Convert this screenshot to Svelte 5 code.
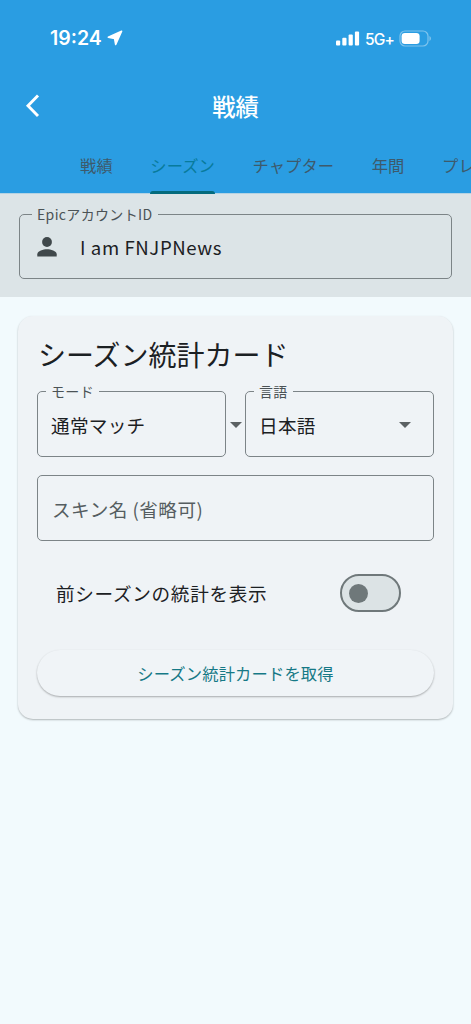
<script lang="ts">
  const tabs = ['戦績', 'シーズン', 'チャプター', '年間', 'プレイリスト'];
  let active = $state('シーズン');
  let previous = $state(false);
</script>

{#snippet arrow()}
  <svg class="arrow" width="12" height="6" viewBox="0 0 12 6"><path d="M0 0h12L6 6z" fill="#5b6163" /></svg>
{/snippet}

<div class="screen">
  <header>
    <div class="status">
      <span class="time">19:24</span>
      <svg class="location" width="16" height="16" viewBox="0 0 16 16">
        <path d="M14.600 1.200 1.300 7.200 7.600 8.500 8.700 14.500z" fill="#fff" stroke="#fff" stroke-width="1.600" stroke-linejoin="round" />
      </svg>
      <svg class="signal" width="24" height="15" viewBox="0 0 24 15" fill="#fff">
        <rect x="0" y="9.500" width="4.200" height="5" rx="1" />
        <rect x="6.300" y="6.700" width="4.200" height="7.800" rx="1" />
        <rect x="12.600" y="3.600" width="4.200" height="10.900" rx="1" />
        <rect x="18.900" y="0.500" width="4.200" height="14" rx="1" />
      </svg>
      <span class="network">5G+</span>
      <svg class="battery" width="33" height="17" viewBox="0 0 33 17">
        <rect x="1" y="1" width="28" height="15" rx="5" fill="none" stroke="#fff" stroke-opacity=".4" stroke-width="1.200" />
        <rect x="2.600" y="3" width="18" height="11" rx="3.300" fill="#fff" />
        <path d="M30.500 6v5c1.800-.7 1.800-4.300 0-5z" fill="#fff" fill-opacity=".45" />
      </svg>
    </div>

    <div class="bar">
      <svg width="16" height="24" viewBox="0 0 16 24"><path d="M13 1.500 3 11.700 13 22" fill="none" stroke="#fff" stroke-width="2.900" /></svg>
      <h1>戦績</h1>
    </div>

    <nav>
      {#each tabs as tab}
        <button class="tab" class:active={tab === active} onclick={() => (active = tab)}>{tab}</button>
      {/each}
    </nav>
  </header>

  <section class="account">
    <fieldset>
      <legend>EpicアカウントID</legend>
      <svg class="person" width="20" height="20" viewBox="0 0 20 20" fill="#40484b">
        <circle cx="10" cy="5" r="4.900" />
        <path d="M.3 19.500v-2.300c0-3.300 6.200-5 9.700-5s9.700 1.700 9.700 5v2.300z" />
      </svg>
      <span class="value">I am FNJPNews</span>
    </fieldset>
  </section>

  <main>
    <h2>シーズン統計カード</h2>
    <div class="selects">
      <fieldset>
        <legend>モード</legend>
        <span class="value">通常マッチ</span>
      </fieldset>
      <div class="between">{@render arrow()}</div>
      <fieldset>
        <legend>言語</legend>
        <span class="value">日本語</span>
        {@render arrow()}
      </fieldset>
    </div>
    <input type="text" placeholder="スキン名 (省略可)" />
    <div class="option">
      <span>前シーズンの統計を表示</span>
      <button class="switch" class:on={previous} aria-label="前シーズンの統計を表示" onclick={() => (previous = !previous)}>
        <i></i>
      </button>
    </div>
    <button class="submit">シーズン統計カードを取得</button>
  </main>
</div>

<style>
  :global(body) {
    background: #f2fafd;
  }
  .screen {
    box-sizing: border-box;
    height: 1024px;
    overflow: hidden;
    background: #f2fafd;
    color: #1b2023;
    font-family: 'Noto Sans CJK JP', sans-serif;
  }
  button {
    font-family: inherit;
    border: 0;
    padding: 0;
    background: none;
  }
  svg {
    display: block;
    flex: none;
  }

  header {
    height: 194px;
    display: flex;
    flex-direction: column;
    background: linear-gradient(#2a9de2 193px, #b5d3e3 193px);
    color: #fff;
  }
  .status {
    height: 76px;
    display: flex;
    align-items: center;
    padding: 0 39px 0 50px;
    font-family: Inter, sans-serif;
  }
  .time {
    width: 52px;
    font-size: 19.5px;
    font-weight: 600;
    letter-spacing: 0;
  }
  .location {
    margin-left: 5px;
  }
  .signal {
    margin-left: auto;
  }
  .network {
    width: 29px;
    margin: 2px 5px 0 5px;
    font-size: 15.5px;
    font-weight: 500;
    letter-spacing: -0.8px;
  }
  .bar {
    height: 60px;
    display: grid;
    grid-template-columns: 60px 1fr 60px;
    align-items: center;
  }
  .bar svg {
    margin-left: 25px;
  }
  h1 {
    margin: 0;
    text-align: center;
    font-size: 23.3px;
    line-height: 34px;
    font-weight: 500;
  }
  nav {
    height: 58px;
    display: flex;
    gap: 37.5px;
    padding-left: 80px;
    overflow: hidden;
  }
  .tab {
    flex: none;
    position: relative;
    height: 58px;
    color: #3d5a6c;
    font-size: 16.3px;
    letter-spacing: 0.1px;
    white-space: nowrap;
  }
  .tab.active {
    color: #087b9c;
  }
  .tab.active::after {
    content: '';
    position: absolute;
    left: 0;
    right: 0;
    bottom: 0;
    height: 3px;
    border-radius: 3px 3px 0 0;
    background: #046b7d;
  }

  .account {
    box-sizing: border-box;
    height: 103px;
    padding: 12px 19px 0;
    background: #dce4e7;
  }
  fieldset {
    box-sizing: border-box;
    min-width: 0;
    height: 74px;
    margin: 0;
    padding: 0 14px 5px 8px;
    border: 1px solid #7c8487;
    border-radius: 5px;
    display: flex;
    align-items: center;
  }
  legend {
    height: 16px;
    padding: 0 5px;
    color: #4b5356;
    font-size: 14px;
    line-height: 16px;
    letter-spacing: 0.35px;
  }
  .value {
    font-size: 18.6px;
    line-height: 28px;
    letter-spacing: 0.3px;
  }
  .account fieldset {
    height: 73px;
    padding: 0 13px 6px;
  }
  .account legend {
    margin-left: -1px;
  }
  .account .value {
    margin-left: 23px;
    letter-spacing: 0.6px;
  }
  .person {
    margin-left: 4px;
  }

  main {
    box-sizing: border-box;
    height: 403px;
    margin: 19px 18px 0;
    padding: 18px 19px 0;
    border-radius: 15px;
    background: #eff3f6;
    box-shadow: 0 1px 2px rgba(0, 0, 0, 0.28);
  }
  h2 {
    margin: 0 0 9px 1px;
    font-size: 28px;
    line-height: 40px;
    font-weight: 400;
  }
  .selects {
    display: flex;
  }
  .selects fieldset {
    flex: 1;
  }
  .selects .value {
    margin-left: 5px;
  }
  .between {
    width: 19px;
    display: flex;
    align-items: center;
    justify-content: center;
    padding-top: 9px;
  }
  fieldset .arrow {
    margin-left: auto;
    margin-right: 8px;
  }
  input {
    display: block;
    box-sizing: border-box;
    width: 100%;
    height: 66px;
    margin-top: 18px;
    padding: 1px 14px 0;
    border: 1px solid #7c8487;
    border-radius: 5px;
    background: none;
    color: inherit;
    font: 18.6px 'Noto Sans CJK JP', sans-serif;
    letter-spacing: 0.5px;
  }
  input::placeholder {
    color: #555d60;
    opacity: 1;
  }
  .option {
    height: 104px;
    display: flex;
    align-items: center;
    justify-content: space-between;
    padding: 0 33px 0 19px;
    font-size: 18.6px;
    letter-spacing: 0.7px;
  }
  .option span {
    margin-top: -1px;
  }
  .switch {
    box-sizing: border-box;
    width: 61px;
    height: 38px;
    padding: 0 7px;
    display: flex;
    align-items: center;
    border: 2px solid #6f787a;
    border-radius: 19px;
    background: #dce3e5;
  }
  .switch i {
    width: 19px;
    height: 19px;
    border-radius: 50%;
    background: #6f787a;
  }
  .switch.on {
    justify-content: flex-end;
  }
  .submit {
    display: block;
    width: 100%;
    height: 46px;
    margin-top: 5px;
    border-radius: 23px;
    background: #f0f4f7;
    box-shadow: 0 1px 2px rgba(0, 0, 0, 0.3);
    color: #167986;
    font-size: 16.3px;
    letter-spacing: 0.15px;
  }
</style>
